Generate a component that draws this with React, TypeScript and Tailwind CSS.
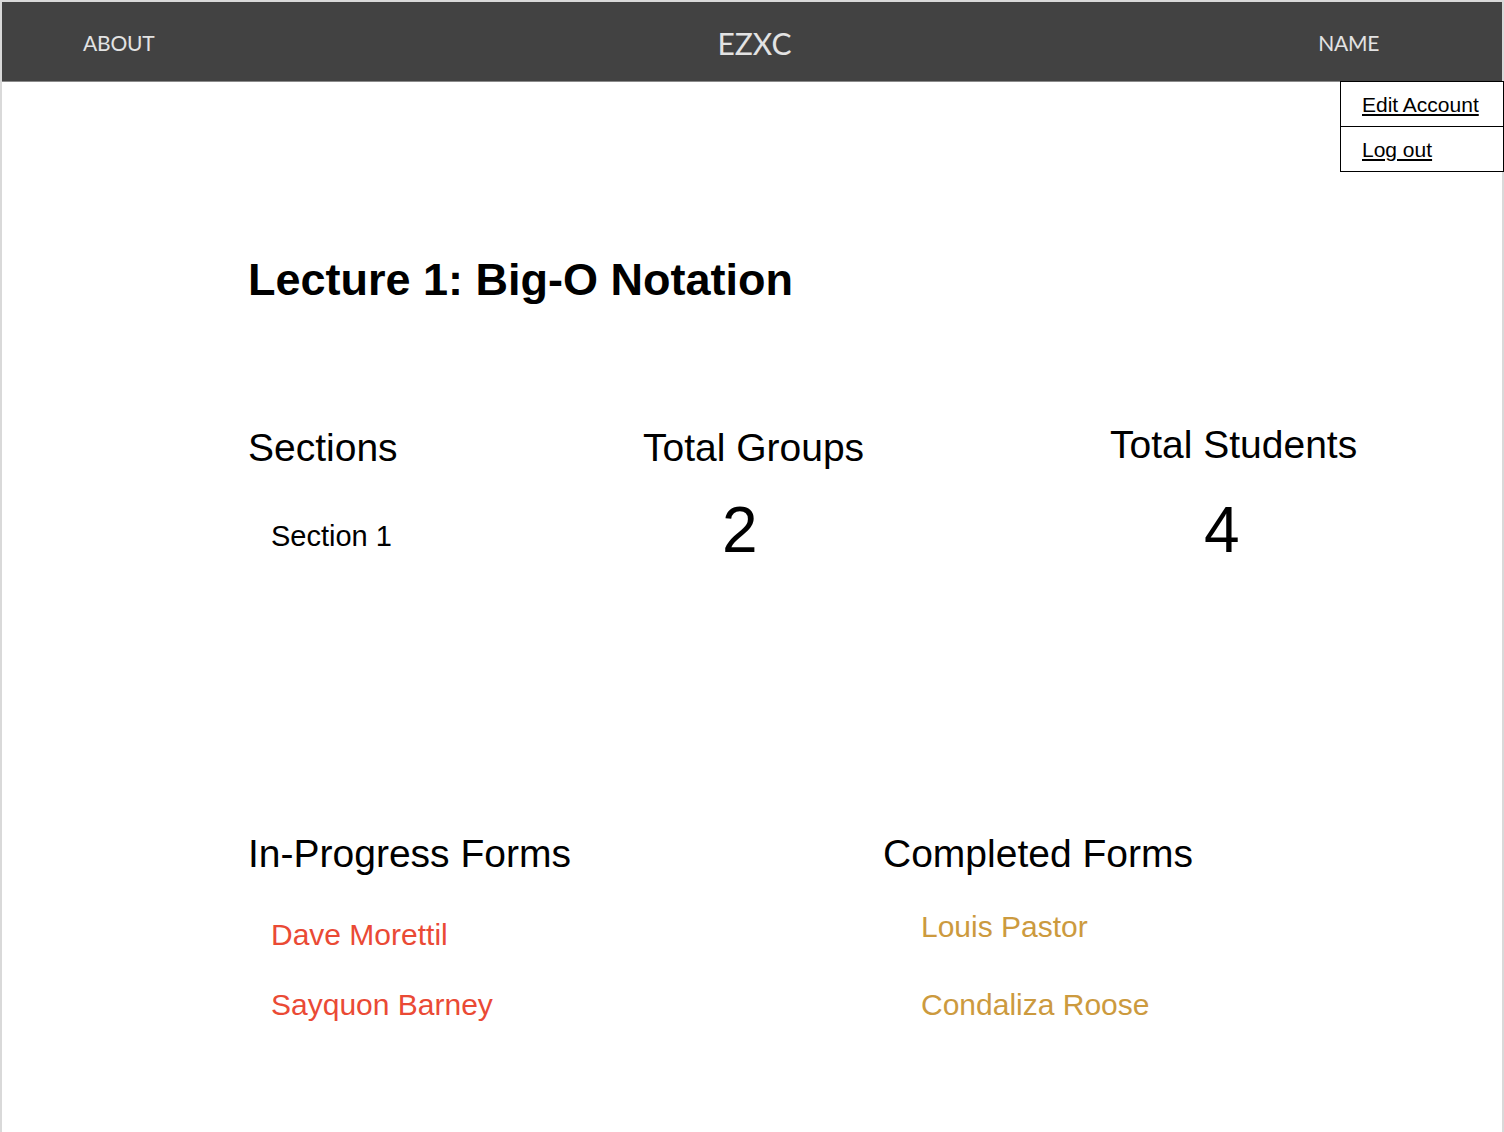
import React from 'react';

const inProgress = ['Dave Morettil', 'Sayquon Barney'];
const completed = ['Louis Pastor', 'Condaliza Roose'];

export default function App() {
  return (
    <div className="min-h-[1132px] w-full border-2 border-b-0 border-[#d9d9d9] bg-white font-['Liberation_Sans',Arial,sans-serif] text-black">
      {/* Top bar */}
      <header className="relative flex h-[80px] items-center justify-between border-b border-[#8a8a8a] bg-[#424242] pl-[81px] pr-[123px] font-['Lato',sans-serif] text-[#e3e3e3]">
        <span className="pt-[2px] text-[21px] tracking-[-0.2px]">ABOUT</span>
        <span className="absolute left-1/2 top-1/2 -translate-x-1/2 -translate-y-1/2 pl-[5px] pt-[3px] text-[30px]">EZXC</span>
        <span className="pt-[2px] text-[21px] tracking-[-0.3px]">NAME</span>

        {/* Account menu */}
        <div className="absolute right-[-2px] top-[79px] z-10 w-[164px] border-[1.5px] border-black bg-white font-['Liberation_Sans',Arial,sans-serif] text-[21px] text-black">
          <a href="#" className="block h-[45px] border-b-[1.5px] border-black pl-[21px] pt-[7px] underline">
            Edit Account
          </a>
          <a href="#" className="block h-[44px] pl-[21px] pt-[7px] underline">
            Log out
          </a>
        </div>
      </header>

      <main className="pl-[246px] pr-[100px]">
        <h1 className="pt-[170px] text-[45px] font-bold leading-[56px]">Lecture 1: Big-O Notation</h1>

        {/* Stats */}
        <div className="mt-[118px] flex">
          <div className="w-[395px]">
            <h2 className="text-[39px] leading-[44px]">Sections</h2>
            <p className="mt-[49px] pl-[23px] text-[29px] leading-[34px]">Section 1</p>
          </div>
          <div className="w-[467px]">
            <h2 className="text-[39px] leading-[44px]">Total Groups</h2>
            <p className="mt-[28px] pl-[79px] text-[64px] leading-[64px]">2</p>
          </div>
          <div>
            <h2 className="-mt-[3px] whitespace-nowrap text-[39px] leading-[44px]">Total Students</h2>
            <p className="mt-[31px] pl-[94px] text-[64px] leading-[64px]">4</p>
          </div>
        </div>

        {/* Forms */}
        <div className="mt-[270px] flex">
          <div className="w-[635px]">
            <h2 className="text-[39px] leading-[44px]">In-Progress Forms</h2>
            <ul className="mt-[41px] flex flex-col gap-[34px] pl-[23px] text-[30px] leading-[36px] text-[#ea4a35]">
              {inProgress.map((n) => (
                <li key={n}>{n}</li>
              ))}
            </ul>
          </div>
          <div>
            <h2 className="text-[39px] leading-[44px]">Completed Forms</h2>
            <ul className="mt-[33px] flex flex-col gap-[42px] pl-[38px] text-[30px] leading-[36px] text-[#cc9a3e]">
              {completed.map((n) => (
                <li key={n}>{n}</li>
              ))}
            </ul>
          </div>
        </div>
      </main>
    </div>
  );
}
